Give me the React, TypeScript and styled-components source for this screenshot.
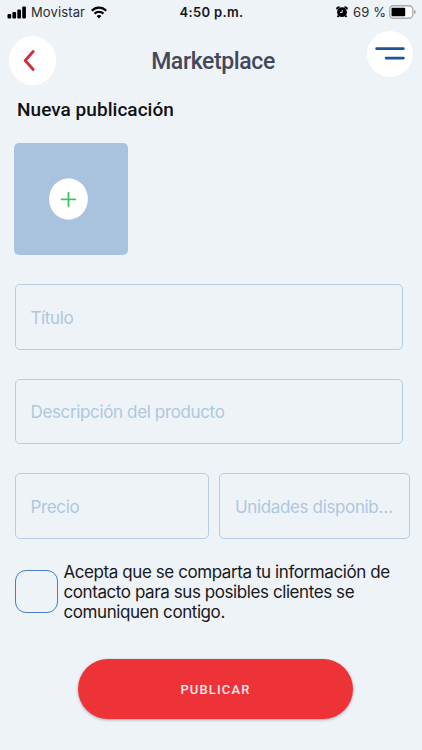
import React from 'react';
import styled, { createGlobalStyle } from 'styled-components';

const GlobalStyle = createGlobalStyle`
  * { box-sizing: border-box; }
  body { margin: 0; background: #eef3f8; }
  button { border: 0; padding: 0; cursor: pointer; }
`;

const Screen = styled.main`
  width: 422px;
  height: 750px;
  overflow: hidden;
  background: #eef3f8;
  font-family: Inter, 'Liberation Sans', sans-serif;
  color: #17181b;
`;

const StatusBar = styled.div`
  height: 24px;
  display: grid;
  grid-template-columns: 1fr auto 1fr;
  align-items: center;
  padding: 0 6px 0 7px;
  font-size: 13px;
  line-height: 24px;
  color: #2b2c2f;
`;

const StatusGroup = styled.div<{ $end?: boolean }>`
  display: flex;
  align-items: center;
  justify-content: ${(p) => (p.$end ? 'flex-end' : 'flex-start')};
`;

const Carrier = styled.span`
  margin: 0 6px 0 4px;
  letter-spacing: 0.12px;
`;

const Clock = styled.span`
  font-weight: 600;
  letter-spacing: 0.35px;
  color: #151618;
`;

const Percent = styled.span`
  margin: 0 3px 0 5px;
  letter-spacing: 0.1px;
`;

const Header = styled.header`
  height: 66px;
  display: flex;
  justify-content: space-between;
  padding: 7px 9px 0;
`;

const RoundButton = styled.button<{ $w: number; $h: number; $top: number }>`
  width: ${(p) => p.$w}px;
  height: ${(p) => p.$h}px;
  margin-top: ${(p) => p.$top}px;
  border-radius: 50%;
  background: #fff;
  display: flex;
  align-items: center;
  justify-content: center;
`;

const Title = styled.h1`
  margin: 15px 0 0 3px;
  font: 500 23px/32px Roboto, sans-serif;
  letter-spacing: -0.38px;
  color: #444858;
`;

const Subtitle = styled.h2`
  margin: 8px 0 0 17px;
  font: 500 19px/24px Roboto, sans-serif;
  letter-spacing: 0.04px;
  color: #101114;
`;

const PhotoTile = styled.button`
  display: flex;
  align-items: center;
  padding-left: 35px;
  width: 114px;
  height: 112px;
  margin: 21px 0 0 14px;
  border-radius: 5px;
  background: #a9c3df;
`;

const Form = styled.form`
  display: flex;
  flex-direction: column;
  gap: 29px;
  padding: 29px 12px 0 14.5px;
`;

const FieldRow = styled.div`
  display: grid;
  grid-template-columns: 194px 191px;
  gap: 10.5px;
`;

const Field = styled.input`
  display: block;
  width: 100%;
  max-width: 388px;
  height: 65.5px;
  padding: 2px 15px 0;
  border: 1.5px solid #b7cce5;
  border-radius: 5px;
  background: transparent;
  font: 400 17px/22px Inter, sans-serif;
  letter-spacing: -0.36px;
  text-overflow: ellipsis;
  outline: none;
  &::placeholder { color: #aec7df; opacity: 1; text-overflow: ellipsis; }
`;

const Consent = styled.label`
  display: flex;
  align-items: center;
  gap: 6px;
  margin: 23px 0 0 14.5px;
  font-size: 17px;
  line-height: 20.3px;
  letter-spacing: -0.42px;
  white-space: pre-line;
`;

const Checkbox = styled.input`
  appearance: none;
  flex: none;
  width: 43px;
  height: 43px;
  margin: 0;
  border: 1px solid #4c7ebb;
  border-radius: 11px;
`;

const PublishButton = styled.button`
  display: block;
  width: 275px;
  height: 60px;
  margin: 37px 0 0 78px;
  padding-top: 1px;
  border-radius: 30px;
  background: #ee3338;
  box-shadow: 0 1px 3px rgba(70, 50, 60, 0.4);
  color: #ffe9e9;
  font: 500 13px/20px Roboto, sans-serif;
  letter-spacing: 1.15px;
`;

const Signal = () => (
  <svg width="20" height="13" viewBox="0 0 20 13" fill="#000">
    <rect x="0.5" y="8" width="3.7" height="4.5" rx="1" />
    <rect x="5.4" y="6" width="3.7" height="6.5" rx="1" />
    <rect x="10.3" y="3.5" width="3.7" height="9" rx="1" />
    <rect x="15.2" y="0.5" width="3.7" height="12" rx="1" />
  </svg>
);

const Wifi = () => (
  <svg width="16" height="13" viewBox="0 0 16 13" fill="none" stroke="#000" strokeWidth="2.2">
    <path d="M0.8 4.8C4.9 .6 11.1 .6 15.2 4.8" />
    <path d="M3.5 7.6C6 5.2 10 5.2 12.5 7.6" />
    <path d="M8 12.4L5.6 10Q8 7.9 10.4 10Z" fill="#000" stroke="none" />
  </svg>
);

const Alarm = () => (
  <svg width="12" height="12" viewBox="0 0 12 12">
    <circle cx="6" cy="6.2" r="4.9" />
    <path d="M1.2 3.4Q.8 1.2 3.6 1.2M10.8 3.4Q11.2 1.2 8.4 1.2M2.6 9.7L1.5 11M9.4 9.7l1.1 1.3" stroke="#000" strokeWidth="1.9" fill="none" />
    <path d="M6.2 3.8v2.7H4" stroke="#eef3f8" strokeWidth="0.9" fill="none" />
  </svg>
);

const Battery = () => (
  <svg width="27" height="14" viewBox="0 0 27 14">
    <rect x="0.75" y="0.75" width="23" height="12.5" rx="3.5" fill="#fbfcfd" stroke="#a8abaf" strokeWidth="1.3" />
    <rect x="2.5" y="2.7" width="13.7" height="8.6" rx="1" />
    <path d="M25 4.7q1.8.6 1.8 2.3T25 9.3z" fill="#a8abaf" />
  </svg>
);

const BackIcon = () => (
  <svg width="47" height="49" viewBox="0 0 47 49" fill="none">
    <path d="M24.2 15.5L16.2 24.5L24.2 33.5" stroke="#d22d39" strokeWidth="2.8" strokeLinecap="round" strokeLinejoin="round" />
  </svg>
);

const MenuIcon = () => (
  <svg width="46" height="46" viewBox="0 0 46 46" fill="none">
    <path d="M9.6 17.7H36.4M19.1 27.1H36.4" stroke="#1e5594" strokeWidth="2.7" strokeLinecap="round" />
  </svg>
);

const PlusIcon = () => (
  <svg width="39" height="42" viewBox="0 0 39 42" fill="none">
    <ellipse cx="19.5" cy="21" rx="19.4" ry="20.7" fill="#fff" />
    <path d="M19.5 14.6v13.6M12.7 21.4h13.6" stroke="#3dc861" strokeWidth="1.9" strokeLinecap="round" />
  </svg>
);

export default function App() {
  return (
    <Screen>
      <GlobalStyle />
      <StatusBar>
        <StatusGroup>
          <Signal />
          <Carrier>Movistar</Carrier>
          <Wifi />
        </StatusGroup>
        <Clock>4:50 p.m.</Clock>
        <StatusGroup $end>
          <Alarm />
          <Percent>69 %</Percent>
          <Battery />
        </StatusGroup>
      </StatusBar>
      <Header>
        <RoundButton $w={47} $h={49} $top={4.5} aria-label="Volver">
          <BackIcon />
        </RoundButton>
        <Title>Marketplace</Title>
        <RoundButton $w={46} $h={46} $top={0} aria-label="Menú">
          <MenuIcon />
        </RoundButton>
      </Header>
      <Subtitle>Nueva publicación</Subtitle>
      <PhotoTile aria-label="Agregar foto">
        <PlusIcon />
      </PhotoTile>
      <Form>
        <Field placeholder="Título" />
        <Field placeholder="Descripción del producto" />
        <FieldRow>
          <Field placeholder="Precio" />
          <Field placeholder="Unidades disponibles" />
        </FieldRow>
      </Form>
      <Consent>
        <Checkbox type="checkbox" />
        <span>
          {'Acepta que se comparta tu información de\ncontacto para sus posibles clientes se\ncomuniquen contigo.'}
        </span>
      </Consent>
      <PublishButton>PUBLICAR</PublishButton>
    </Screen>
  );
}
